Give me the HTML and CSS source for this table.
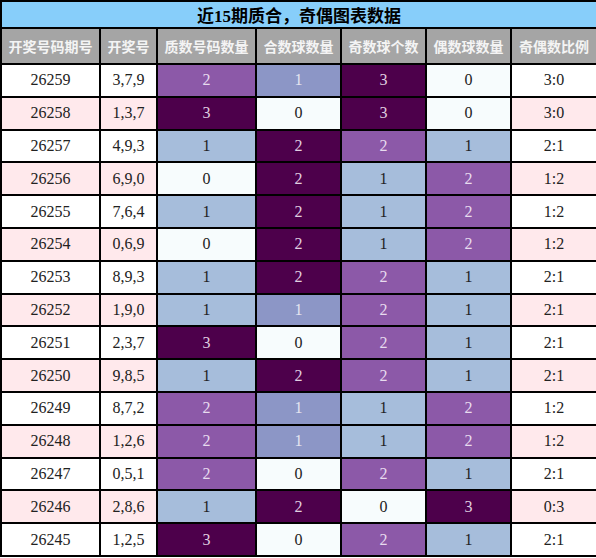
FILE: index.html
```html
<!DOCTYPE html>
<html lang="zh">
<head>
    <meta charset="UTF-8">
    <title>近15期质合，奇偶图表数据</title>
    <link rel="stylesheet" href="styles.css">
</head>
<body>
    <table class="stats">
        <colgroup>
            <col style="width: 99px">
            <col style="width: 57px">
            <col style="width: 99px">
            <col style="width: 85px">
            <col style="width: 85px">
            <col style="width: 85px">
            <col style="width: 86px">
        </colgroup>
        <thead>
            <tr class="title-row"><th colspan="7">近15期质合，奇偶图表数据</th></tr>
            <tr class="head-row">
                <th>开奖号码期号</th><th>开奖号</th><th>质数号码数量</th><th>合数球数量</th><th>奇数球个数</th><th>偶数球数量</th><th>奇偶数比例</th>
            </tr>
        </thead>
        <tbody id="rows"></tbody>
    </table>

    <script>
        // 期号, 开奖号, [值, 色级] x4, 比例
        const data = [
            ['26259', '3,7,9', [2, 'mp'], [1, 'lav'], [3, 'dk'], [0, 'vl'], '3:0'],
            ['26258', '1,3,7', [3, 'dk'], [0, 'vl'], [3, 'dk'], [0, 'vl'], '3:0'],
            ['26257', '4,9,3', [1, 'lb'], [2, 'dk'], [2, 'mp'], [1, 'lb'], '2:1'],
            ['26256', '6,9,0', [0, 'vl'], [2, 'dk'], [1, 'lb'], [2, 'mp'], '1:2'],
            ['26255', '7,6,4', [1, 'lb'], [2, 'dk'], [1, 'lb'], [2, 'mp'], '1:2'],
            ['26254', '0,6,9', [0, 'vl'], [2, 'dk'], [1, 'lb'], [2, 'mp'], '1:2'],
            ['26253', '8,9,3', [1, 'lb'], [2, 'dk'], [2, 'mp'], [1, 'lb'], '2:1'],
            ['26252', '1,9,0', [1, 'lb'], [1, 'lav'], [2, 'mp'], [1, 'lb'], '2:1'],
            ['26251', '2,3,7', [3, 'dk'], [0, 'vl'], [2, 'mp'], [1, 'lb'], '2:1'],
            ['26250', '9,8,5', [1, 'lb'], [2, 'dk'], [2, 'mp'], [1, 'lb'], '2:1'],
            ['26249', '8,7,2', [2, 'mp'], [1, 'lav'], [1, 'lb'], [2, 'mp'], '1:2'],
            ['26248', '1,2,6', [2, 'mp'], [1, 'lav'], [1, 'lb'], [2, 'mp'], '1:2'],
            ['26247', '0,5,1', [2, 'mp'], [0, 'vl'], [2, 'mp'], [1, 'lb'], '2:1'],
            ['26246', '2,8,6', [1, 'lb'], [2, 'dk'], [0, 'vl'], [3, 'dk'], '0:3'],
            ['26245', '1,2,5', [3, 'dk'], [0, 'vl'], [2, 'mp'], [1, 'lb'], '2:1']
        ];

        const tbody = document.getElementById('rows');
        data.forEach((row, i) => {
            const tr = document.createElement('tr');
            tr.className = i % 2 ? 'alt' : '';
            let html = '<td>' + row[0] + '</td><td>' + row[1] + '</td>';
            for (let k = 2; k < 6; k++) {
                html += '<td class="c-' + row[k][1] + '">' + row[k][0] + '</td>';
            }
            html += '<td>' + row[6] + '</td>';
            tr.innerHTML = html;
            tbody.appendChild(tr);
        });
    </script>
</body>
</html>
```

FILE: styles.css
```css
body {
    margin: 0;
    background: #fff;
}
.stats {
    width: 596px;
    table-layout: fixed;
    border-collapse: collapse;
    font-family: "Liberation Serif", "Noto Sans CJK SC", serif;
    font-size: 16px;
    color: #222;
}
.stats th, .stats td {
    border: 2px solid #000;
    padding: 0;
    text-align: center;
}
.title-row th {
    height: 23px;
    background: #87cefa;
    color: #000;
    font-size: 17px;
    font-weight: bold;
    font-family: "Liberation Serif", "Noto Sans CJK SC", serif;
}
.head-row th {
    height: 34px;
    background: #a5a5a5;
    color: #f4f4f4;
    font-family: "Noto Sans CJK SC", sans-serif;
    font-size: 14px;
    font-weight: bold;
}
.stats td {
    height: 30.8px;
    background: #fff;
}
.stats tr.alt td {
    background: #ffe9ec;
}
.stats tr td.c-vl {
    background: #f7fcfd;
    color: #222;
}
.stats tr td.c-lb {
    background: #a6bddb;
    color: #222;
}
.stats tr td.c-lav {
    background: #8c96c6;
    color: #e4e4f0;
}
.stats tr td.c-mp {
    background: #8c59a8;
    color: #e8dcef;
}
.stats tr td.c-dk {
    background: #4d004b;
    color: #e0cfe0;
}
```
